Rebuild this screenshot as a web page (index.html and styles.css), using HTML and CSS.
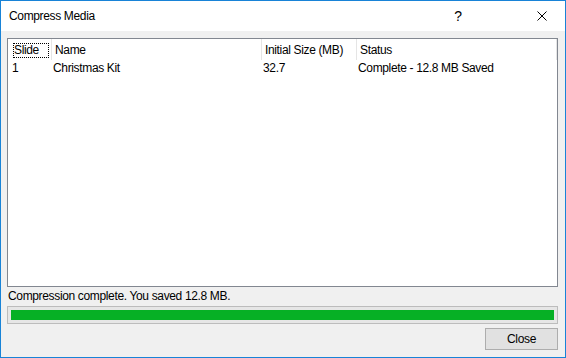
FILE: index.html
```html
<!DOCTYPE html>
<html lang="en">
<head>
    <meta charset="UTF-8">
    <meta name="viewport" content="width=device-width, initial-scale=1.0">
    <title>Compress Media</title>
    <link rel="stylesheet" href="styles.css">
</head>
<body>
    <div class="window">
        <div class="titlebar">
            <span class="title">Compress Media</span>
            <span class="ctrl help">?</span>
            <span class="ctrl close">
                <svg width="10" height="10" viewBox="0 0 10 10">
                    <path d="M0.5 0.5 L9.5 9.5 M9.5 0.5 L0.5 9.5" stroke="#000" stroke-width="1" fill="none"/>
                </svg>
            </span>
        </div>
        <div class="content">
            <div class="list">
                <div class="list-header">
                    <div class="col c1"><span class="focus">Slide</span></div>
                    <div class="col c2">Name</div>
                    <div class="col c3">Initial Size (MB)</div>
                    <div class="col c4">Status</div>
                </div>
                <div class="list-row">
                    <div class="cell c1">1</div>
                    <div class="cell c2">Christmas Kit</div>
                    <div class="cell c3">32.7</div>
                    <div class="cell c4">Complete - 12.8 MB Saved</div>
                </div>
            </div>
            <div class="status">Compression complete. You saved 12.8 MB.</div>
            <div class="progress">
                <div class="progress-fill"></div>
            </div>
            <div class="actions">
                <button type="button" class="btn">Close</button>
            </div>
        </div>
    </div>
</body>
</html>
```

FILE: styles.css
```css
body {
    margin: 0;
    padding: 0;
    font-family: "Liberation Sans", Arial, sans-serif;
    font-size: 12px;
    line-height: 15px;
    letter-spacing: -0.35px;
    color: #000;
}
.window {
    width: 566px;
    height: 358px;
    box-sizing: border-box;
    border: 1px solid #1883d7;
    display: flex;
    flex-direction: column;
    background: #f0f0f0;
}
.titlebar {
    height: 30px;
    background: #fff;
    display: flex;
    align-items: center;
}
.title {
    flex: 1;
    padding-left: 8px;
}
.ctrl {
    width: 46px;
    height: 30px;
    display: flex;
    align-items: center;
    justify-content: center;
}
.help {
    font-size: 14px;
    margin-right: 38px;
}
.close svg {
    display: block;
}
.content {
    flex: 1;
    padding: 7px 7px 0 6px;
    display: flex;
    flex-direction: column;
}
.list {
    height: 249px;
    box-sizing: border-box;
    border: 1px solid #828790;
    background: #fff;
}
.list-header {
    display: flex;
    height: 21px;
}
.col {
    box-sizing: border-box;
    border-right: 1px solid #e5e5e5;
    padding: 4px 0 0 3px;
    white-space: nowrap;
}
.c1 { width: 44px; }
.c2 { width: 210px; }
.c3 { width: 95px; }
.c4 { width: 200px; }
.col.c1 {
    padding-left: 5px;
}
.focus {
    display: inline-block;
    width: 36px;
    box-sizing: border-box;
    outline: 1px dotted #000;
    outline-offset: -1px;
    padding-left: 1px;
}
.list-row {
    display: flex;
    height: 17px;
    padding-top: 1px;
}
.cell {
    box-sizing: border-box;
    padding-left: 1px;
    white-space: nowrap;
}
.cell.c1 {
    padding-left: 4px;
}
.status {
    margin-top: 2px;
    padding-left: 1px;
}
.progress {
    margin-top: 2px;
    height: 18px;
    box-sizing: border-box;
    border: 1px solid #bcbcbc;
    background: #e6e6e6;
    padding: 3px;
}
.progress-fill {
    height: 10px;
    background: #06b025;
}
.actions {
    display: flex;
    justify-content: flex-end;
    margin-top: 4px;
}
.btn {
    width: 73px;
    height: 22px;
    font-family: inherit;
    font-size: 12px;
    letter-spacing: inherit;
    background: #e1e1e1;
    border: 1px solid #adadad;
    padding: 0;
    color: #000;
}
```
